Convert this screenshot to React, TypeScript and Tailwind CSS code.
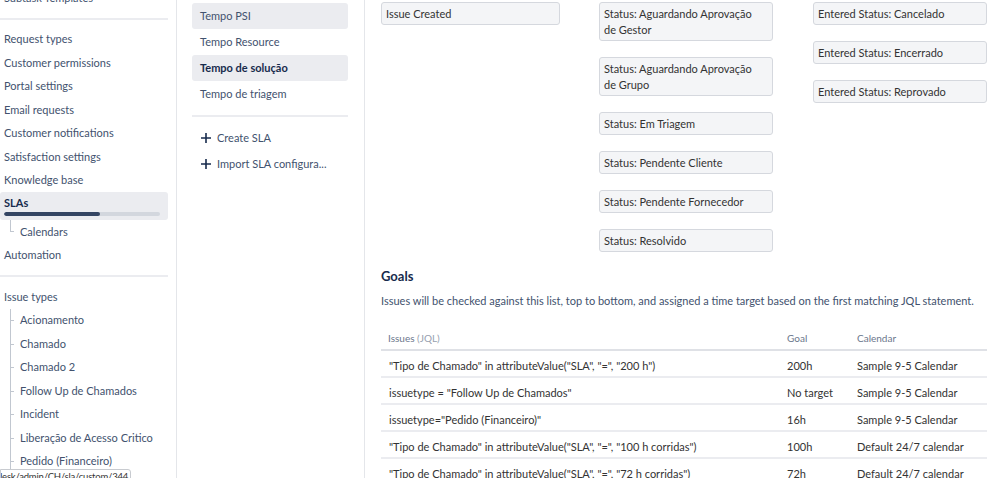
import React from "react";

const navTop = [
  "Request types",
  "Customer permissions",
  "Portal settings",
  "Email requests",
  "Customer notifications",
  "Satisfaction settings",
  "Knowledge base",
];

const issueTypes = [
  "Acionamento",
  "Chamado",
  "Chamado 2",
  "Follow Up de Chamados",
  "Incident",
  "Liberação de Acesso Critico",
  "Pedido (Financeiro)",
];

const slaList = [
  { name: "Tempo PSI", active: true, bold: false },
  { name: "Tempo Resource", active: false, bold: false },
  { name: "Tempo de solução", active: true, bold: true },
  { name: "Tempo de triagem", active: false, bold: false },
];

const goals = [
  { jql: '"Tipo de Chamado" in attributeValue("SLA", "=", "200 h")', goal: "200h", cal: "Sample 9-5 Calendar" },
  { jql: 'issuetype = "Follow Up de Chamados"', goal: "No target", cal: "Sample 9-5 Calendar" },
  { jql: 'issuetype="Pedido (Financeiro)"', goal: "16h", cal: "Sample 9-5 Calendar" },
  { jql: '"Tipo de Chamado" in attributeValue("SLA", "=", "100 h corridas")', goal: "100h", cal: "Default 24/7 calendar" },
  { jql: '"Tipo de Chamado" in attributeValue("SLA", "=", "72 h corridas")', goal: "72h", cal: "Default 24/7 calendar" },
];

const StatusBox: React.FC<{ text: string }> = ({ text }) => (
  <div className="border border-[#d5d8de] bg-[#f4f5f7] rounded-[3px] pl-[4px] pr-[16px] py-[2.5px] leading-[16px] text-[#333333]">
    {text}
  </div>
);

const NavItem: React.FC<{ label: string }> = ({ label }) => (
  <div className="h-[23.5px] flex items-center pl-[4px] text-[#42526e] whitespace-nowrap">{label}</div>
);

const Plus = () => (
  <svg width="10" height="10" viewBox="0 0 10 10" className="shrink-0">
    <path d="M5 0v10M0 5h10" stroke="#172b4d" strokeWidth="1.6" />
  </svg>
);

export default function App() {
  return (
    <div className="w-[998px] h-[478px] overflow-hidden bg-white flex relative font-['Lato','Open_Sans',sans-serif] text-[11px]">
      {/* project settings sidebar */}
      <aside className="w-[177px] shrink-0 border-r border-[#e4e6ea] pr-[8px]">
        <div className="-mt-[14px]">
          <NavItem label="Subtask Templates" />
          <div className="mt-[8px] mb-[8px] h-[2px] bg-[#ebecf0]" />
          {navTop.map((n) => (
            <NavItem key={n} label={n} />
          ))}
          <div className="h-[28px] bg-[#ebecf0] rounded-[3px] pl-[4px] pr-[8px] pt-[3px]">
            <div className="leading-[16px] font-bold text-[#172b4d]">SLAs</div>
            <div className="mt-[1px] h-[4px] rounded-full bg-[#d3d7de] overflow-hidden">
              <div className="h-full w-[96px] bg-[#344563] rounded-full" />
            </div>
          </div>
          <div className="h-[23.5px] flex items-center relative pl-[20px] text-[#42526e]">
            <span className="absolute left-[10px] top-0 h-[12px] w-[4px] border-l border-b border-[#c1c7d0]" />
            Calendars
          </div>
          <NavItem label="Automation" />
          <div className="mt-[8px] mb-[8px] h-[2px] bg-[#ebecf0]" />
          <NavItem label="Issue types" />
          <div className="relative">
            <span className="absolute left-[10px] top-0 bottom-0 border-l border-[#c1c7d0]" />
            {issueTypes.map((t) => (
              <div
                key={t}
                className="h-[23.5px] flex items-center relative pl-[20px] text-[#42526e] whitespace-nowrap"
              >
                <span className="absolute left-[10px] top-[11.5px] w-[4px] border-t border-[#c1c7d0]" />
                {t}
              </div>
            ))}
          </div>
        </div>
      </aside>

      {/* SLA list */}
      <div className="w-[188px] shrink-0 border-r border-[#e4e6ea] pl-[15px] pr-[16px] pt-[3px]">
        {slaList.map((s) => (
          <div
            key={s.name}
            className={`h-[26px] flex items-center px-[8px] rounded-[3px] ${s.active ? "bg-[#ebecf0]" : ""} ${
              s.bold ? "font-bold text-[#172b4d]" : "text-[#42526e]"
            }`}
          >
            {s.name}
          </div>
        ))}
        <div className="mt-[8px] mb-[8px] h-[2px] bg-[#ebecf0]" />
        <div className="h-[26px] flex items-center gap-[6px] pl-[9px] text-[#42526e]">
          <Plus />
          Create SLA
        </div>
        <div className="h-[26px] flex items-center gap-[6px] pl-[9px] text-[#42526e] whitespace-nowrap">
          <Plus />
          Import SLA configura...
        </div>
      </div>

      {/* SLA detail */}
      <main className="flex-1 pl-[16px] pr-[11px] pt-[2px]">
        <div className="flex items-start">
          <div className="w-[179px] mr-[39px]">
            <StatusBox text="Issue Created" />
          </div>
          <div className="w-[174px] mr-[40px] flex flex-col gap-[16px]">
            <StatusBox text="Status: Aguardando Aprovação de Gestor" />
            <StatusBox text="Status: Aguardando Aprovação de Grupo" />
            <StatusBox text="Status: Em Triagem" />
            <StatusBox text="Status: Pendente Cliente" />
            <StatusBox text="Status: Pendente Fornecedor" />
            <StatusBox text="Status: Resolvido" />
          </div>
          <div className="w-[174px] flex flex-col gap-[16px]">
            <StatusBox text="Entered Status: Cancelado" />
            <StatusBox text="Entered Status: Encerrado" />
            <StatusBox text="Entered Status: Reprovado" />
          </div>
        </div>

        <h2 className="mt-[14px] text-[13px] leading-[20px] font-bold text-[#172b4d]">Goals</h2>
        <p className="mt-[7px] leading-[16px] text-[#42526e] whitespace-nowrap">
          Issues will be checked against this list, top to bottom, and assigned a time target based on the first
          matching JQL statement.
        </p>

        <div className="mt-[21px]">
          <div className="grid grid-cols-[398px_70px_1fr] border-b-2 border-[#dfe1e6] pb-[3px] text-[10px] leading-[16px] text-[#6b778c]">
            <div className="px-[7px]">
              Issues <span className="text-[#97a0af]">(JQL)</span>
            </div>
            <div className="px-[8px]">Goal</div>
            <div className="px-[8px]">Calendar</div>
          </div>
          {goals.map((g) => (
            <div
              key={g.jql}
              className="grid grid-cols-[398px_70px_1fr] h-[27px] items-center pt-[5px] border-b-2 border-[#ebecf0] text-[#333333] whitespace-nowrap"
            >
              <div className="px-[8px]">{g.jql}</div>
              <div className="px-[8px]">{g.goal}</div>
              <div className="px-[8px]">{g.cal}</div>
            </div>
          ))}
        </div>
      </main>

      {/* link status tooltip */}
      <div className="absolute left-0 top-[469px] w-[131px] h-[20px] bg-white border border-[#c8cbd0] rounded-tr-[3px] text-[#333333] text-[9.5px] tracking-[-0.2px] leading-[14px] whitespace-nowrap overflow-hidden">
        <span className="block -ml-[4px]">desk/admin/CH/sla/custom/344</span>
      </div>
    </div>
  );
}
